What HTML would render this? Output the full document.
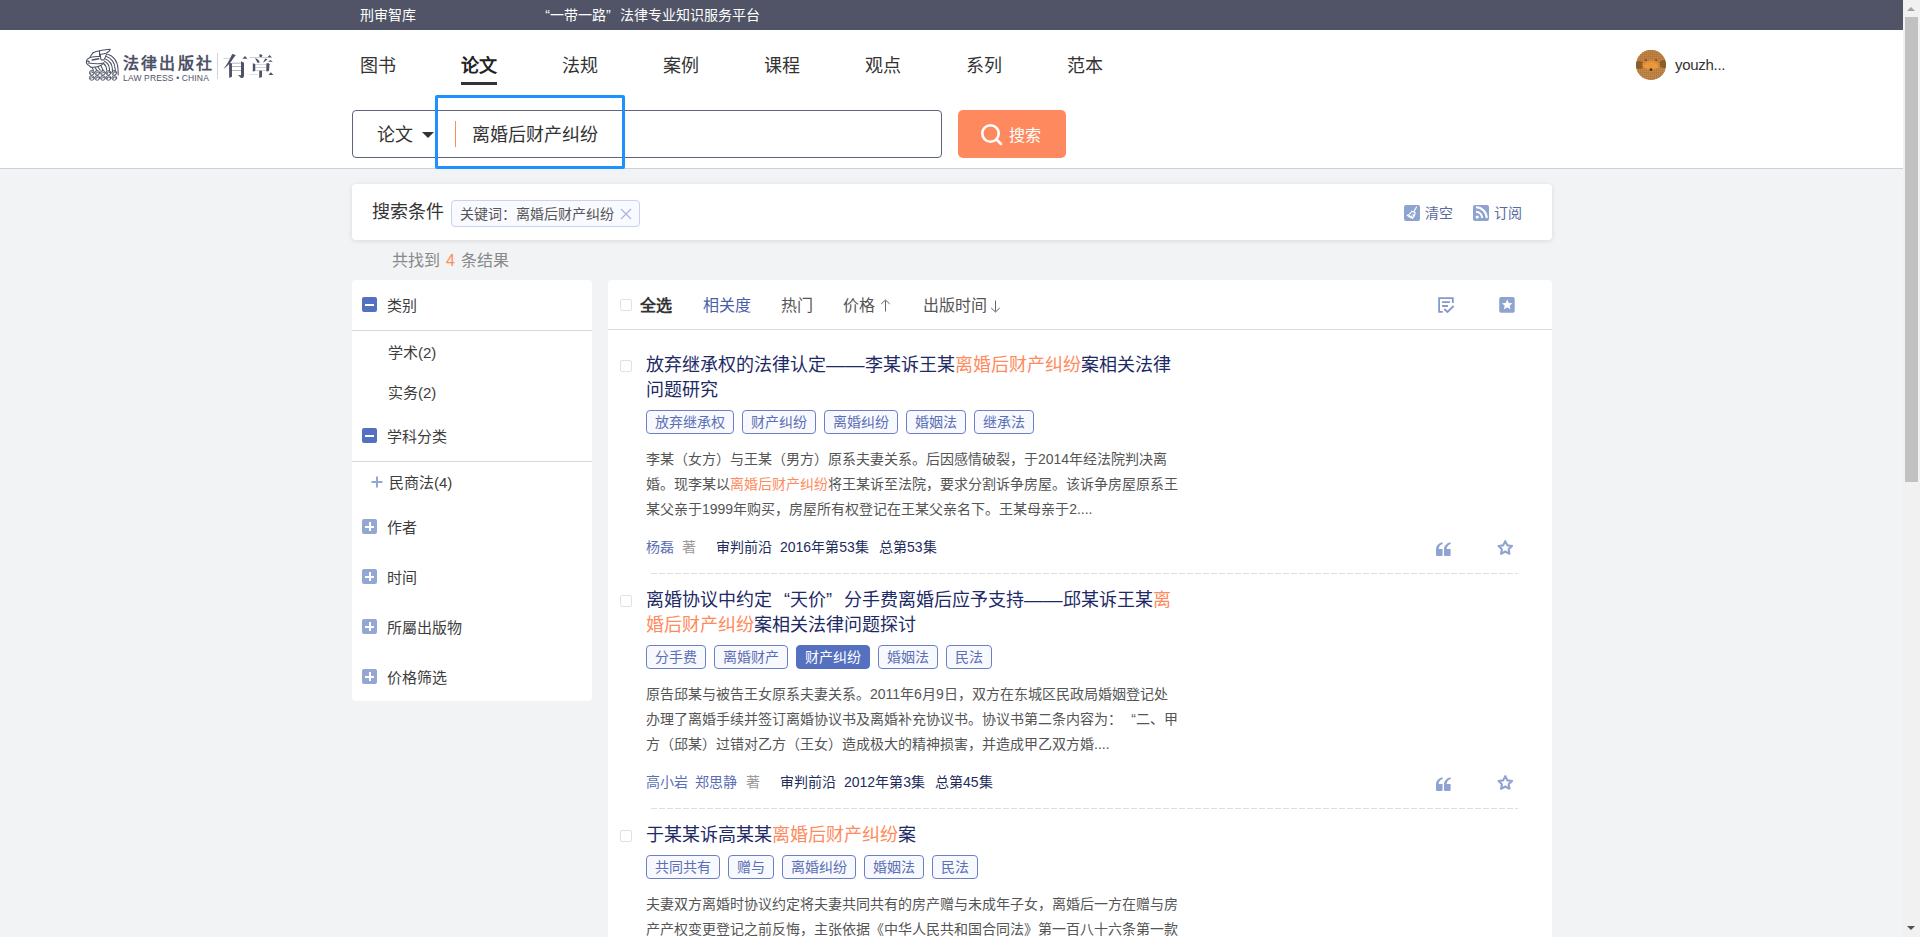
<!DOCTYPE html>
<html lang="zh-CN"><head><meta charset="utf-8">
<style>
*{box-sizing:border-box;margin:0;padding:0}
html,body{width:1920px;height:937px;overflow:hidden}
body{font-family:"Liberation Sans",sans-serif;background:#f2f3f5;position:relative;color:#333}
.abs{position:absolute}
#topbar{left:0;top:0;width:1903px;height:30px;background:#505466;color:#fff;font-size:14px;line-height:30px}
#header{left:0;top:30px;width:1903px;height:139px;background:#fff;border-bottom:1px solid #cdd0dc}
.nav{font-size:18px;line-height:25px;color:#333;top:54px}
.nav.on{font-weight:bold;color:#222}
.nav.on:after{content:"";position:absolute;left:0;top:28px;width:36px;height:3px;background:#333}
#sbox{left:352px;top:110px;width:590px;height:48px;border:1px solid #5f6578;border-radius:4px;background:#fff}
#hl{left:435px;top:95px;width:190px;height:74px;border:3px solid #1e90ff;border-radius:2px}
#sbtn{left:958px;top:110px;width:108px;height:48px;background:#ff895e;border-radius:5px;color:#fff;font-size:16px}
.card{background:#fff;border-radius:4px}
#cond{left:352px;top:184px;width:1200px;height:56px;box-shadow:0 1px 5px rgba(0,0,0,.1)}
#side{left:352px;top:280px;width:240px;height:421px}
#main{left:608px;top:280px;width:944px;height:700px}
.sb{width:15px;height:15px;border-radius:2px;background:#5470c0;position:absolute}
.sb:after{content:"";position:absolute;left:3px;top:6.5px;width:9px;height:2px;background:#fff}
.sp{background:#94a6d2}
.sp:before{content:"";position:absolute;left:6.5px;top:3px;width:2px;height:9px;background:#fff}
.stxt{position:absolute;font-size:15px;line-height:20px;color:#3d3d3d;margin-top:1px}
.hr{position:absolute;left:0;width:240px;height:1px;background:#d9d9d9}
.item{position:absolute;left:0;width:944px}
.cb{position:absolute;left:12px;width:12px;height:12px;border:1px solid #dfe1e8;border-radius:2px;background:#fff}
.ttl{position:absolute;left:38px;width:530px;font-size:18px;line-height:25px;color:#1e2a66;margin-top:1px}
.hi{color:#ff8a5e}
.fq{display:inline-block;width:18px;text-align:right}
.fq.r{text-align:left}
.fq.s{width:14px}
.tags{position:absolute;left:38px;height:24px;white-space:nowrap}
.tag{display:inline-block;height:24px;line-height:22px;padding:0 8px;border:1px solid #6c80c4;border-radius:4px;background:#f8f9fe;color:#5b6fb5;font-size:14px;margin-right:8px;vertical-align:top}
.tag.sel{background:#5470bf;border-color:#5470bf;color:#fff}
.abst{position:absolute;left:38px;width:534px;font-size:14px;line-height:25px;color:#555;word-break:break-all;margin-top:1px}
.meta{position:absolute;left:38px;font-size:14px;line-height:25px;color:#222b5c;white-space:nowrap;margin-top:1px;width:500px;height:25px}
.meta span{position:absolute;top:0}
.meta .au{color:#5b6fb5}
.meta .zh{color:#999}
.dash{position:absolute;left:43px;width:867px;height:1px;background:repeating-linear-gradient(90deg,#dcdfe8 0 6px,transparent 6px 8px)}
</style></head><body>
<div id="topbar" class="abs">
  <span class="abs" style="left:360px;top:0">刑审智库</span>
  <span class="abs" style="left:536px;top:0"><span class="fq s">“</span>一带一路<span class="fq s r">”</span>法律专业知识服务平台</span>
</div>
<div id="header" class="abs"></div>
<svg class="abs" style="left:82px;top:45px" width="40" height="40" viewBox="0 0 40 40" fill="none" stroke="#4d5266" stroke-width="1.05" stroke-linecap="round" stroke-linejoin="round">
<path d="M11 7.8 C13 6.5 16 5.8 19 5.4 C22 5 25.5 4.4 28.3 4.2 C28 5.6 26.5 7.2 24 8.2 C22 8.8 20 9.2 18.4 9.2"/>
<path d="M17.5 6 V10.5"/>
<path d="M11 7.8 C9.5 9.5 8.5 11 8.1 12.4 C6.5 13 5 14 4.6 15.3 C4.2 16.5 4.3 18 5.2 19.2 C6.5 20.5 8 21.5 9 22.2"/>
<path d="M18.4 9.2 C18.6 11 18.6 13 18.8 14.1 C19.5 15 20.8 15.2 21.8 15 C22.8 13.5 23.8 11.5 24.5 9.2"/>
<path d="M10.3 15 L16.7 13.7" stroke-width="1.6"/>
<path d="M8.1 12.4 C11 11.6 14 11.3 18.4 11.5"/>
<path d="M5 16.3 C6 16 7 16.2 7.5 17"/>
<path d="M6.4 18 C10 18.6 13 18.9 16.2 18.8 C18 18.7 20 18.4 21.4 18"/>
<path d="M9 22.2 C12 22.5 15 22 17.5 21 C19.5 20.2 21 19.2 21.8 18"/>
<path d="M10 22.5 L11.5 25.3 M13 22.4 L14.8 25.3 M15.8 21.8 L18.3 25.3 M18.8 20.4 L21.2 25.3"/>
<path d="M25.6 9.2 C31 10.5 35.8 16 36 24 L36.2 30"/>
<path d="M24.4 11.6 C29 13 33 17.5 33.2 24 L33.2 26.5"/>
<path d="M23.4 14 C27 15.5 30.2 19 30.4 24 L30.4 26.5"/>
<path d="M22.4 16.2 C25.5 17.8 27.3 20.5 27.5 24 L27.5 26"/>
<path d="M21.6 18.5 C23.5 20 24.5 22 24.6 25"/>
<g stroke-width="0.95"><circle cx="9.8" cy="27.8" r="2.35"/><path d="M8.700000000000001 28.400000000000002 A1.15 1.15 0 1 1 10.9 27.8"/><circle cx="15.2" cy="27.8" r="2.35"/><path d="M14.1 28.400000000000002 A1.15 1.15 0 1 1 16.3 27.8"/><circle cx="20.9" cy="27.8" r="2.35"/><path d="M19.799999999999997 28.400000000000002 A1.15 1.15 0 1 1 22.0 27.8"/><circle cx="26.5" cy="27.8" r="2.35"/><path d="M25.4 28.400000000000002 A1.15 1.15 0 1 1 27.6 27.8"/><circle cx="32.3" cy="27.8" r="2.35"/><path d="M31.199999999999996 28.400000000000002 A1.15 1.15 0 1 1 33.4 27.8"/><circle cx="9.8" cy="32.9" r="2.35"/><path d="M8.700000000000001 33.5 A1.15 1.15 0 1 1 10.9 32.9"/><circle cx="15.2" cy="32.9" r="2.35"/><path d="M14.1 33.5 A1.15 1.15 0 1 1 16.3 32.9"/><circle cx="20.9" cy="32.9" r="2.35"/><path d="M19.799999999999997 33.5 A1.15 1.15 0 1 1 22.0 32.9"/><circle cx="26.5" cy="32.9" r="2.35"/><path d="M25.4 33.5 A1.15 1.15 0 1 1 27.6 32.9"/><circle cx="32.3" cy="32.9" r="2.35"/><path d="M31.199999999999996 33.5 A1.15 1.15 0 1 1 33.4 32.9"/></g>
</svg>
<div class="abs" style="left:123px;top:53px;font-size:16px;line-height:22px;font-weight:bold;letter-spacing:2.2px;color:#4d5266;white-space:nowrap">法律出版社</div>
<div class="abs" style="left:123px;top:73px;font-size:8.5px;line-height:10px;letter-spacing:0.15px;color:#4d5266;white-space:nowrap">LAW PRESS • CHINA</div>
<div class="abs" style="left:217px;top:53px;width:1px;height:26px;background:#d0d3da"></div>
<svg class="abs" style="left:214px;top:48px" width="64" height="36" viewBox="0 0 64 36" fill="#4d5266" stroke="none">
<path d="M9.4 10.2 H17 V10.8 H9.4Z" fill="#b9bcc6"/>
<path d="M18.2 6 L21.8 7 L19.2 10.5 C16.5 15 13 18.5 9.4 21 C12.8 17 15.5 12 18.2 6Z"/>
<path d="M15 14.3 L18 15.5 V28.8 L15.2 30 Z"/>
<path d="M27 13.2 L30 14.8 V27.5 C30 29.5 28.5 30.2 27 30 L24 27 L27 27.3 Z"/>
<path d="M18 14.8 H27 V15.5 H18Z M18 18.3 H27 V19 H18Z M18 22.3 H27 V23 H18Z" fill="#9a9eab"/>
<path d="M28.5 10.8 L31 8 L33.5 10.8Z"/>
<path d="M35.4 9 H58 V9.6 H35.4Z" fill="#a8acb8"/>
<path d="M45.4 6 L48.5 7 L47.8 9 H45.6Z"/>
<path d="M53.5 9.2 L55.6 7 L57.7 9.2Z"/>
<path d="M41 10 C43.5 10.8 45.5 12.5 45.6 14.2 C45 15.2 43.5 15 43 14 C42.5 12.5 41.8 11.2 41 10Z"/>
<path d="M49 14.8 L51.2 10.4 L53.5 11.2 C52 12.5 50.5 13.8 49 14.8Z"/>
<path d="M54 13.8 L56.4 12 L58.8 13.8Z"/>
<path d="M38.8 15.2 L41.3 16 V23 L38.8 23.6Z"/>
<path d="M52.3 15.5 L54.5 15 L55.5 16.3 L55 23 L52.3 23.6Z"/>
<path d="M41.3 16.2 H52.3 V16.8 H41.3Z M41.3 19.2 H52.3 V19.8 H41.3Z M41.3 22.2 H52.3 V22.8 H41.3Z" fill="#a8acb8"/>
<path d="M35.2 26 H43.8 V26.6 H35.2Z" fill="#c6c9d2"/>
<path d="M45.2 22.7 L48 22.7 V29 L45.2 30Z"/>
<path d="M54.4 26.9 L56.9 24.2 L59.4 26.9Z"/>
</svg>

<div class="abs nav" style="left:360px">图书</div>
<div class="abs nav on" style="left:461px">论文</div>
<div class="abs nav" style="left:562px">法规</div>
<div class="abs nav" style="left:663px">案例</div>
<div class="abs nav" style="left:764px">课程</div>
<div class="abs nav" style="left:865px">观点</div>
<div class="abs nav" style="left:966px">系列</div>
<div class="abs nav" style="left:1067px">范本</div>

<svg class="abs" style="left:1636px;top:50px" width="30" height="30" viewBox="0 0 30 30"><defs><clipPath id="avc"><circle cx="15" cy="15" r="15"/></clipPath></defs><g clip-path="url(#avc)"><rect width="30" height="30" fill="#c98b48"/><rect y="0" width="30" height="10" fill="#c48545"/><ellipse cx="3" cy="15" rx="5" ry="4" fill="#8f5f2e"/><ellipse cx="28" cy="14" rx="5" ry="4" fill="#8f5f2e"/><ellipse cx="15" cy="15" rx="9" ry="5" fill="#e8953a"/><ellipse cx="11" cy="16.5" rx="3" ry="2" fill="#f3a646"/><ellipse cx="19" cy="16.5" rx="3" ry="2" fill="#f3a646"/><circle cx="15" cy="19.5" r="1.2" fill="#4a2e14"/><path d="M8 11 L10 8.5 L11.5 11Z M22 11 L20 8.5 L18.5 11Z" fill="#8a5526"/><rect y="21" width="30" height="9" fill="#c68a4c"/><defs><pattern id="avp" width="2" height="2" patternUnits="userSpaceOnUse"><path d="M0 0.5H2M0.5 0V2" stroke="#7a4c20" stroke-width="0.5" opacity="0.35"/></pattern></defs><rect width="30" height="30" fill="url(#avp)"/><ellipse cx="15" cy="15.5" rx="7" ry="3.5" fill="#eb9a3e" opacity="0.8"/><circle cx="15" cy="19.5" r="1.2" fill="#4a2e14"/></g></svg>
<div class="abs" style="left:1675px;top:55px;font-size:15px;line-height:20px;color:#333;letter-spacing:-0.3px">youzh...</div>

<div id="sbox" class="abs">
  <span class="abs" style="left:24px;top:12px;font-size:18px;line-height:25px;color:#333">论文</span>
  <span class="abs" style="left:69px;top:21px;width:0;height:0;border-left:6px solid transparent;border-right:6px solid transparent;border-top:6px solid #333"></span>
  <span class="abs" style="left:102px;top:10px;width:1px;height:26px;background:#ff8a5e"></span>
  <span class="abs" style="left:119px;top:12px;font-size:18px;line-height:25px;color:#333">离婚后财产纠纷</span>
</div>
<div id="hl" class="abs"></div>
<div id="sbtn" class="abs">
  <svg class="abs" style="left:22px;top:13px" width="24" height="24" viewBox="0 0 24 24"><circle cx="10.5" cy="10.5" r="8.2" fill="none" stroke="#fff" stroke-width="2.6"/><path d="M16.5 16.5 L21 21" stroke="#fff" stroke-width="2.6" stroke-linecap="round"/></svg>
  <span class="abs" style="left:51px;top:14px;line-height:24px">搜索</span>
</div>

<div id="cond" class="abs card">
  <span class="abs" style="left:20px;top:16px;font-size:18px;line-height:25px;color:#333">搜索条件</span>
  <div class="abs" style="left:99px;top:16px;width:189px;height:27px;border:1px solid #c9d3f0;border-radius:4px;background:#f8faff">
    <span class="abs" style="left:8px;top:3px;font-size:14px;line-height:20px;color:#555">关键词：离婚后财产纠纷</span>
    <svg class="abs" style="left:168px;top:7px" width="12" height="12" viewBox="0 0 12 12"><path d="M1 1L11 11M11 1L1 11" stroke="#aab6dc" stroke-width="1.3"/></svg>
  </div>
  <svg class="abs" style="left:1052px;top:21px" width="16" height="16" viewBox="0 0 16 16"><rect width="16" height="16" rx="2" fill="#8fa3d0"/><g fill="none" stroke="#fff" stroke-width="1.2" stroke-linejoin="round" stroke-linecap="round"><path d="M12.5 2 L10 6.5"/><path d="M8 6.2 L11.2 7.8 C11 10 10 12 8.5 13.3 C7 12.8 5.2 11.8 3.2 10.3 C5 9.8 6.8 8.2 8 6.2Z"/><path d="M5.5 10.5 L6.5 12 M7.5 11 L8.3 12.8 M9 9.5 L9.8 11"/></g></svg>
  <span class="abs" style="left:1073px;top:19px;font-size:14px;line-height:20px;color:#5a6aa0">清空</span>
  <svg class="abs" style="left:1121px;top:21px" width="16" height="16" viewBox="0 0 16 16"><rect width="16" height="16" rx="2" fill="#8fa3d0"/><g fill="none" stroke="#fff" stroke-width="2"><path d="M3 6.8 A6.2 6.2 0 0 1 9.2 13"/><path d="M3 2.3 A10.7 10.7 0 0 1 13.7 13"/></g><circle cx="4.2" cy="12" r="1.6" fill="#fff"/></svg>
  <span class="abs" style="left:1142px;top:19px;font-size:14px;line-height:20px;color:#5a6aa0">订阅</span>
</div>

<div class="abs" style="left:392px;top:250px;font-size:16px;line-height:22px;color:#888;word-spacing:1.5px">共找到 <span class="hi">4</span> 条结果</div>

<div id="side" class="abs card">
  <div class="sb" style="left:10px;top:17px"></div><span class="stxt" style="left:35px;top:15px">类别</span>
  <div class="hr" style="top:50px"></div>
  <span class="stxt" style="left:36px;top:62px">学术(2)</span>
  <span class="stxt" style="left:36px;top:102px">实务(2)</span>
  <div class="sb" style="left:10px;top:148px"></div><span class="stxt" style="left:35px;top:146px">学科分类</span>
  <div class="hr" style="top:181px"></div>
  <svg class="abs" style="left:19px;top:196px" width="12" height="12" viewBox="0 0 12 12"><path d="M6 0.5V11.5M0.5 6H11.5" stroke="#94a6d2" stroke-width="2"/></svg><span class="stxt" style="left:37px;top:192px">民商法(4)</span>
  <div class="sb sp" style="left:10px;top:239px"></div><span class="stxt" style="left:35px;top:237px">作者</span>
  <div class="sb sp" style="left:10px;top:289px"></div><span class="stxt" style="left:35px;top:287px">时间</span>
  <div class="sb sp" style="left:10px;top:339px"></div><span class="stxt" style="left:35px;top:337px">所屬出版物</span>
  <div class="sb sp" style="left:10px;top:389px"></div><span class="stxt" style="left:35px;top:387px">价格筛选</span>
</div>

<div id="main" class="abs card">
  <div class="cb" style="top:19px"></div>
  <span class="abs" style="left:32px;top:15px;font-size:16px;line-height:22px;font-weight:bold;color:#333">全选</span>
  <span class="abs" style="left:95px;top:15px;font-size:16px;line-height:22px;color:#4a5fa8">相关度</span>
  <span class="abs" style="left:173px;top:15px;font-size:16px;line-height:22px;color:#555">热门</span>
  <span class="abs" style="left:235px;top:15px;font-size:16px;line-height:22px;color:#555">价格</span><svg class="abs" style="left:270px;top:18px" width="14" height="16" viewBox="0 0 14 16" fill="none" stroke="#666" stroke-width="1"><path d="M7.5 2.5 V13.5 M3.2 6 L7.5 2 L11.8 6"/></svg>
  <span class="abs" style="left:315px;top:15px;font-size:16px;line-height:22px;color:#555">出版时间</span><svg class="abs" style="left:380px;top:18px" width="14" height="16" viewBox="0 0 14 16" fill="none" stroke="#666" stroke-width="1"><path d="M7.5 2.5 V13.5 M3.2 10 L7.5 14 L11.8 10"/></svg>
  <div class="abs" style="left:0;top:49px;width:944px;height:1px;background:#dddddd"></div>
  <svg class="abs" style="left:826px;top:13px" width="24" height="24" viewBox="0 0 24 24" fill="none" stroke="#8799cc" stroke-width="1.8"><path d="M8.8 18.9 H5.1 V5.1 H18.8 V9.9"/><path d="M8.1 9.05 H15.9 M8.1 13 H14"/><path d="M10.3 16 L13.5 19 L19.6 13"/></svg>
  <svg class="abs" style="left:887px;top:13px" width="24" height="24" viewBox="0 0 24 24"><rect x="4.2" y="4.1" width="15.5" height="15.6" rx="1.8" fill="#8fa3d0"/><path d="M12.2 6.6 L13.8 9.9 L17.4 10.3 L14.7 12.7 L15.5 16.2 L12.2 14.4 L8.9 16.2 L9.7 12.7 L7 10.3 L10.6 9.9Z" fill="#fff"/></svg>

  <!-- item 1 -->
  <div class="item" style="top:72px">
    <div class="cb" style="top:8px"></div>
    <div class="ttl" style="top:0">放弃继承权的法律认定<span style="display:inline-block;width:38.5px;transform:scaleX(1.07);transform-origin:0 0">——</span>李某诉王某<span class="hi">离婚后财产纠纷</span>案相关法律问题研究</div>
    <div class="tags" style="top:58px"><span class="tag">放弃继承权</span><span class="tag">财产纠纷</span><span class="tag">离婚纠纷</span><span class="tag">婚姻法</span><span class="tag">继承法</span></div>
    <div class="abst" style="top:94px">李某（女方）与王某（男方）原系夫妻关系。后因感情破裂，于2014年经法院判决离婚。现李某以<span class="hi">离婚后财产纠纷</span>将王某诉至法院，要求分割诉争房屋。该诉争房屋原系王某父亲于1999年购买，房屋所有权登记在王某父亲名下。王某母亲于2....</div>
    <div class="meta" style="top:182px"><span class="au" style="left:0">杨磊</span><span class="zh" style="left:36px">著</span><span style="left:70px">审判前沿</span><span style="left:134px">2016年第53集</span><span style="left:233px">总第53集</span></div>
    <svg class="abs" style="left:826px;top:189px" width="18" height="16" viewBox="0 0 18 16" fill="#8fa3d0"><path d="M2 8 H8.6 V14 A1 1 0 0 1 7.6 15 H3 A1 1 0 0 1 2 14Z M2 9 C2 5 4.2 2.3 8.4 1.2 L8.8 3.1 C6 4 4.8 5.8 4.6 8.5Z"/><path d="M10 8 H16.6 V14 A1 1 0 0 1 15.6 15 H11 A1 1 0 0 1 10 14Z M10 9 C10 5 12.2 2.3 16.4 1.2 L16.8 3.1 C14 4 12.8 5.8 12.6 8.5Z"/></svg>
    <svg class="abs" style="left:886px;top:186px" width="21" height="21" viewBox="0 0 19 19" fill="none" stroke="#8fa3d0" stroke-width="1.9" stroke-linejoin="round"><path d="M10.2 2.8 L12.1 6.7 L16.3 7.2 L13.2 10.1 L14 14.3 L10.2 12.2 L6.4 14.3 L7.2 10.1 L4.1 7.2 L8.3 6.7Z"/></svg>
    <div class="dash" style="top:221px"></div>
  </div>
  <!-- item 2 -->
  <div class="item" style="top:307px">
    <div class="cb" style="top:8px"></div>
    <div class="ttl" style="top:0">离婚协议中约定<span class="fq">“</span>天价<span class="fq r">”</span>分手费离婚后应予支持<span style="display:inline-block;width:38.5px;transform:scaleX(1.07);transform-origin:0 0">——</span>邱某诉王某<span class="hi">离婚后财产纠纷</span>案相关法律问题探讨</div>
    <div class="tags" style="top:58px"><span class="tag">分手费</span><span class="tag">离婚财产</span><span class="tag sel">财产纠纷</span><span class="tag">婚姻法</span><span class="tag">民法</span></div>
    <div class="abst" style="top:94px">原告邱某与被告王女原系夫妻关系。2011年6月9日，双方在东城区民政局婚姻登记处办理了离婚手续并签订离婚协议书及离婚补充协议书。协议书第二条内容为：<span class="fq s">“</span>二、甲方（邱某）过错对乙方（王女）造成极大的精神损害，并造成甲乙双方婚....</div>
    <div class="meta" style="top:182px"><span class="au" style="left:0">高小岩</span><span class="au" style="left:49px">郑思静</span><span class="zh" style="left:100px">著</span><span style="left:134px">审判前沿</span><span style="left:198px">2012年第3集</span><span style="left:289px">总第45集</span></div>
    <svg class="abs" style="left:826px;top:189px" width="18" height="16" viewBox="0 0 18 16" fill="#8fa3d0"><path d="M2 8 H8.6 V14 A1 1 0 0 1 7.6 15 H3 A1 1 0 0 1 2 14Z M2 9 C2 5 4.2 2.3 8.4 1.2 L8.8 3.1 C6 4 4.8 5.8 4.6 8.5Z"/><path d="M10 8 H16.6 V14 A1 1 0 0 1 15.6 15 H11 A1 1 0 0 1 10 14Z M10 9 C10 5 12.2 2.3 16.4 1.2 L16.8 3.1 C14 4 12.8 5.8 12.6 8.5Z"/></svg>
    <svg class="abs" style="left:886px;top:186px" width="21" height="21" viewBox="0 0 19 19" fill="none" stroke="#8fa3d0" stroke-width="1.9" stroke-linejoin="round"><path d="M10.2 2.8 L12.1 6.7 L16.3 7.2 L13.2 10.1 L14 14.3 L10.2 12.2 L6.4 14.3 L7.2 10.1 L4.1 7.2 L8.3 6.7Z"/></svg>
    <div class="dash" style="top:221px"></div>
  </div>
  <!-- item 3 -->
  <div class="item" style="top:542px">
    <div class="cb" style="top:8px"></div>
    <div class="ttl" style="top:0">于某某诉高某某<span class="hi">离婚后财产纠纷</span>案</div>
    <div class="tags" style="top:33px"><span class="tag">共同共有</span><span class="tag">赠与</span><span class="tag">离婚纠纷</span><span class="tag">婚姻法</span><span class="tag">民法</span></div>
    <div class="abst" style="top:69px">夫妻双方离婚时协议约定将夫妻共同共有的房产赠与未成年子女，离婚后一方在赠与房产产权变更登记之前反悔，主张依据《中华人民共和国合同法》第一百八十六条第一款规定撤销赠与。</div>
  </div>
</div>

<!-- scrollbar -->
<div class="abs" style="left:1903px;top:0;width:17px;height:937px;background:#f1f1f1"></div>
<div class="abs" style="left:1905px;top:17px;width:13px;height:465px;background:#c1c1c1"></div>
<div class="abs" style="left:1907px;top:7px;width:0;height:0;border-left:4px solid transparent;border-right:4px solid transparent;border-bottom:4px solid #a3a3a3"></div>
<div class="abs" style="left:1907px;top:926px;width:0;height:0;border-left:4px solid transparent;border-right:4px solid transparent;border-top:4px solid #505050"></div>
</body></html>
